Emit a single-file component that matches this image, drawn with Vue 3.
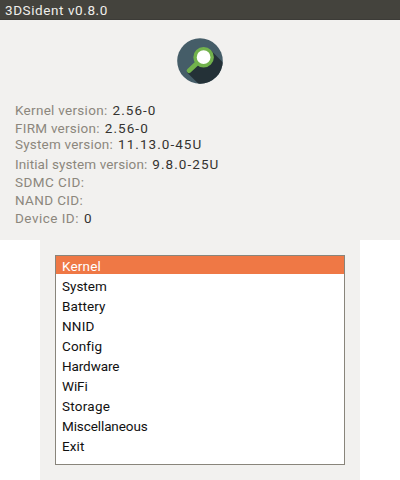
<script setup>
const details = [
  { label: 'Kernel version:', value: '2.56-0', height: 18, tracking: 0.29 },
  { label: 'FIRM version:', value: '2.56-0', height: 16, tracking: 0.26 },
  { label: 'System version:', value: '11.13.0-45U', height: 20, tracking: 0.2 },
  { label: 'Initial system version:', value: '9.8.0-25U', height: 18, tracking: 0.1 },
  { label: 'SDMC CID:', value: '', height: 18, tracking: 0.45 },
  { label: 'NAND CID:', value: '', height: 18, tracking: 0.35 },
  { label: 'Device ID:', value: '0', height: 18, tracking: 0.48 },
]
const menu = [
  { name: 'Kernel', tracking: 0.17 },
  { name: 'System', tracking: 0 },
  { name: 'Battery', tracking: 0.1 },
  { name: 'NNID', tracking: 0.2 },
  { name: 'Config', tracking: 0.1 },
  { name: 'Hardware', tracking: -0.1 },
  { name: 'WiFi', tracking: -0.1 },
  { name: 'Storage', tracking: 0.25 },
  { name: 'Miscellaneous', tracking: -0.1 },
  { name: 'Exit', tracking: 0.1 },
]
</script>

<template>
  <div class="console">
    <section class="top">
      <header class="title">3DSident v0.8.0</header>
      <svg class="logo" viewBox="0 0 46 46">
        <defs>
          <clipPath id="disc"><circle cx="23" cy="23" r="22.8" /></clipPath>
        </defs>
        <circle cx="23" cy="23" r="22.8" fill="#455d68" />
        <path d="M33.5 12 L60 38.5 L36 60 L10 34.5 L20 24 Z" fill="#243137" clip-path="url(#disc)" />
        <path d="M12 32.7 L20 25.3" stroke="#72b24c" stroke-width="4.6" stroke-linecap="round" />
        <circle cx="26.6" cy="19.2" r="8.6" fill="#fff" stroke="#72b24c" stroke-width="3.4" />
      </svg>
      <div class="details">
        <div v-for="d in details" :key="d.label" class="line" :style="{ height: d.height + 'px' }">
          <span class="label" :style="{ letterSpacing: d.tracking + 'px' }">{{ d.label }}</span>
          <span class="value">{{ d.value }}</span>
        </div>
      </div>
    </section>
    <section class="bottom">
      <ul class="menu">
        <li v-for="(m, i) in menu" :key="m.name" :class="{ selected: i === 0 }" :style="{ letterSpacing: m.tracking + 'px' }">{{ m.name }}</li>
      </ul>
    </section>
  </div>
</template>

<style>
body { background: #fff; }
</style>

<style scoped>
.console {
  width: 400px;
  height: 480px;
  display: flex;
  flex-direction: column;
  align-items: center;
  font-family: Roboto, "Liberation Sans", sans-serif;
  font-size: 13.5px;
}
.top {
  width: 400px;
  height: 240px;
  background: #f2f1ef;
  display: flex;
  flex-direction: column;
}
.title {
  box-sizing: border-box;
  height: 20px;
  padding-left: 5px;
  line-height: 20px;
  letter-spacing: 0.58px;
  background: #44433d;
  border-bottom: 1px solid #3c3b37;
  color: #f0efeb;
}
.logo {
  width: 46px;
  height: 46px;
  margin: 18px 0 0 177px;
}
.details {
  padding: 17px 0 0 15px;
}
.line {
  display: flex;
  gap: 5px;
  line-height: 18px;
  white-space: nowrap;
}
.label { color: #8c877d; }
.value { color: #34332f; letter-spacing: 1.05px; }
.bottom {
  box-sizing: border-box;
  width: 320px;
  height: 240px;
  padding: 15px;
  background: #f2f1ef;
}
.menu {
  box-sizing: border-box;
  height: 210px;
  margin: 0;
  padding: 0;
  list-style: none;
  border: 1px solid #89857b;
  background: #fff;
  color: #111;
}
.menu li {
  height: 20px;
  line-height: 20px;
  padding-left: 6px;
}
.menu .selected {
  height: 18px;
  margin-bottom: 2px;
  background: #ef7845;
  color: #fff;
}
</style>
